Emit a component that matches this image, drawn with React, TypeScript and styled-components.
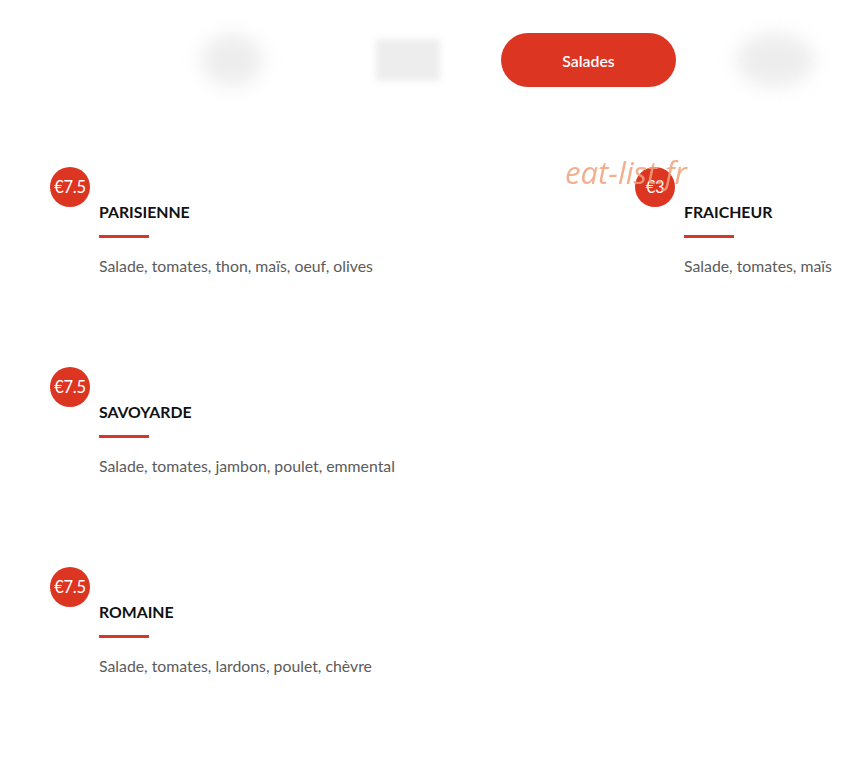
import React from 'react';
import styled, { createGlobalStyle } from 'styled-components';

const GlobalStyle = createGlobalStyle`
  html, body {
    margin: 0;
    padding: 0;
    background: #ffffff;
  }
  body {
    font-family: Lato, "Open Sans", "Liberation Sans", sans-serif;
    -webkit-font-smoothing: antialiased;
  }
`;

const Page = styled.div`
  position: relative;
  width: 850px;
  min-height: 772px;
  overflow: hidden;
`;

const Tabs = styled.nav`
  display: flex;
  align-items: center;
  height: 54px;
  padding-top: 33px;
`;

const BlurTab = styled.div<{ $w: number; $h: number; $ml: number; $round?: boolean }>`
  width: ${(p) => p.$w}px;
  height: ${(p) => p.$h}px;
  margin-left: ${(p) => p.$ml}px;
  flex-shrink: 0;
  background: #e9e9e9;
  border-radius: ${(p) => (p.$round ? '50%' : '2px')};
  filter: blur(${(p) => (p.$round ? 9 : 3)}px);
  opacity: 0.8;
`;

const ActiveTab = styled.button`
  width: 175px;
  height: 54px;
  margin-left: 61px;
  flex-shrink: 0;
  border: none;
  border-radius: 27px;
  background: #dc3522;
  color: #ffffff;
  font-family: Lato, "Open Sans", sans-serif;
  font-size: 15.8px;
  font-weight: 600;
  cursor: pointer;
`;

const Grid = styled.section`
  display: grid;
  grid-template-columns: 585px 215px;
  grid-auto-rows: 200px;
  padding: 80px 0 0 50px;
`;

const Item = styled.article`
  position: relative;
  padding: 35px 0 0 49px;
  white-space: nowrap;
`;

const Price = styled.span`
  position: absolute;
  top: 0;
  left: 0;
  width: 40px;
  height: 40px;
  border-radius: 50%;
  background: #dc3522;
  color: #ffffff;
  display: flex;
  align-items: center;
  justify-content: center;
  font-size: 16.5px;
  letter-spacing: -0.3px;
`;

const Title = styled.h3`
  margin: 0;
  font-size: 15.8px;
  line-height: 20px;
  font-weight: 700;
  color: #111111;
`;

const Rule = styled.div`
  width: 50px;
  height: 3px;
  margin-top: 13px;
  background: #d23a27;
`;

const Desc = styled.p`
  margin: 18px 0 0;
  font-size: 15.8px;
  line-height: 20px;
  color: #5b5b5b;
`;

const Watermark = styled.div`
  position: absolute;
  top: 152px;
  left: 565px;
  font-family: "Open Sans", "Noto Sans", sans-serif;
  font-style: italic;
  font-size: 31px;
  line-height: 40px;
  color: #f0a27c;
  opacity: 0.85;
  pointer-events: none;
`;

const items = [
  { price: '€7.5', name: 'PARISIENNE', desc: 'Salade, tomates, thon, maïs, oeuf, olives' },
  { price: '€3', name: 'FRAICHEUR', desc: 'Salade, tomates, maïs' },
  { price: '€7.5', name: 'SAVOYARDE', desc: 'Salade, tomates, jambon, poulet, emmental' },
  null,
  { price: '€7.5', name: 'ROMAINE', desc: 'Salade, tomates, lardons, poulet, chèvre' },
];

export default function App() {
  return (
    <Page>
      <GlobalStyle />
      <Tabs>
        <BlurTab $w={62} $h={52} $ml={201} $round />
        <BlurTab $w={64} $h={42} $ml={113} />
        <ActiveTab>Salades</ActiveTab>
        <BlurTab $w={78} $h={54} $ml={60} $round />
      </Tabs>
      <Grid>
        {items.map((it, i) =>
          it ? (
            <Item key={i}>
              <Price>{it.price}</Price>
              <Title>{it.name}</Title>
              <Rule />
              <Desc>{it.desc}</Desc>
            </Item>
          ) : (
            <div key={i} />
          )
        )}
      </Grid>
      <Watermark>eat-list.fr</Watermark>
    </Page>
  );
}
